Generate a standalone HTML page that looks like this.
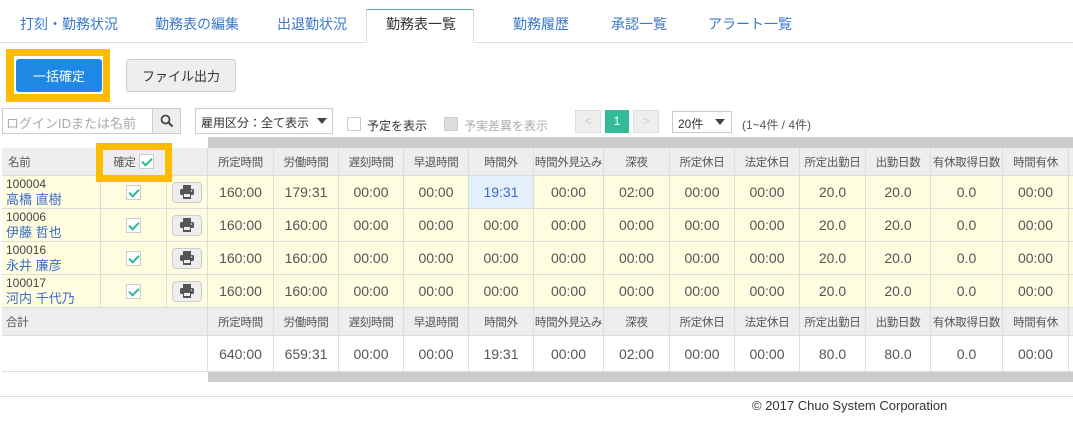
<!DOCTYPE html>
<html><head><meta charset="utf-8"><style>
*{box-sizing:border-box;margin:0;padding:0}
body{width:1073px;height:421px;background:#fff;font-family:"Liberation Sans","Noto Sans CJK JP",sans-serif;color:#333;position:relative;overflow:hidden;font-size:12px}
.a{position:absolute}
.tab{position:absolute;top:14px;font-size:14px;color:#3a78c8;white-space:nowrap}
.cell{position:absolute;border-right:1px solid #ddd;border-bottom:1px solid #ddd;display:flex;align-items:center;justify-content:center;white-space:nowrap;overflow:hidden}
.h{background:#eee;font-size:11.5px;color:#555;letter-spacing:-0.3px}
.d{background:#fffde0;font-size:14px;color:#555}
.t{background:#fff;font-size:14px;color:#555}
.cb{width:15px;height:15px;border:1px solid #ccc;background:#fff;position:relative;display:inline-block}
.cb:after{content:"";position:absolute;left:4px;top:1px;width:4px;height:8px;border:solid #2fb896;border-width:0 2px 2px 0;transform:rotate(45deg)}
.pr{width:30px;height:21px;border:1px solid #ccc;border-radius:4px;background:#eee;display:flex;align-items:center;justify-content:center}
</style></head><body>
<div class="a" style="left:0;top:42px;width:1073px;height:1px;background:#ddd"></div>
<div class="a" style="left:366px;top:9px;width:108px;height:34px;border:1px solid #ddd;border-top:1px solid #5aa;border-bottom:none;background:#fff"></div>
<div class="tab" style="left:20px">打刻・勤務状況</div>
<div class="tab" style="left:155px">勤務表の編集</div>
<div class="tab" style="left:277px">出退勤状況</div>
<div class="tab" style="left:386px;color:#333">勤務表一覧</div>
<div class="tab" style="left:513px">勤務履歴</div>
<div class="tab" style="left:611px">承認一覧</div>
<div class="tab" style="left:708px">アラート一覧</div>

<div class="a" style="left:6px;top:49px;width:104px;height:53px;background:#fcbd00"></div>
<div class="a" style="left:14px;top:56px;width:89px;height:38px;background:#fff"></div>
<div class="a" style="left:16px;top:59px;width:86px;height:33px;background:#1e88e5;border-radius:3px;color:#fff;font-size:13px;display:flex;align-items:center;justify-content:center">一括確定</div>
<div class="a" style="left:126px;top:59px;width:110px;height:33px;background:#eee;border:1px solid #ccc;border-radius:3px;font-size:13px;display:flex;align-items:center;justify-content:center">ファイル出力</div>

<div class="a" style="left:2px;top:108px;width:151px;height:26px;border:1px solid #ccc;color:#aaa;font-size:13px;padding:4px 3px;white-space:nowrap">ログインIDまたは名前</div>
<div class="a" style="left:152px;top:108px;width:29px;height:26px;border:1px solid #ccc;background:#eee;display:flex;align-items:center;justify-content:center"><svg width="14" height="14" viewBox="0 0 14 14"><circle cx="5.5" cy="5.5" r="4" fill="none" stroke="#444" stroke-width="1.8"/><path d="M8.5 8.5L12.5 12.5" stroke="#444" stroke-width="2"/></svg></div>
<div class="a" style="left:195px;top:108px;width:138px;height:26px;border:1px solid #ccc;font-size:12px;padding:5px 5px;color:#333;white-space:nowrap">雇用区分：全て表示</div>
<div class="a" style="left:317px;top:118px;border-left:5px solid transparent;border-right:5px solid transparent;border-top:6px solid #444"></div>
<div class="a" style="left:347px;top:117px;width:14px;height:14px;border:1px solid #ccc"></div>
<div class="a" style="left:367px;top:117px;font-size:12px">予定を表示</div>
<div class="a" style="left:444px;top:117px;width:14px;height:14px;border:1px solid #ccc;background:#ddd"></div>
<div class="a" style="left:464px;top:117px;font-size:12px;color:#aaa">予実差異を表示</div>
<div class="a" style="left:575px;top:110px;width:26px;height:23px;background:#eee;border:1px solid #ddd;color:#ccc;text-align:center;line-height:21px">&lt;</div>
<div class="a" style="left:605px;top:110px;width:24px;height:23px;background:#33bb99;color:#fff;text-align:center;line-height:23px">1</div>
<div class="a" style="left:633px;top:110px;width:26px;height:23px;background:#eee;border:1px solid #ddd;color:#ccc;text-align:center;line-height:21px">&gt;</div>
<div class="a" style="left:672px;top:111px;width:60px;height:22px;border:1px solid #ccc;padding:3px 5px">20件</div>
<div class="a" style="left:715px;top:119px;border-left:5px solid transparent;border-right:5px solid transparent;border-top:6px solid #444"></div>
<div class="a" style="left:742px;top:116px;color:#555;font-size:12px">(1~4件 / 4件)</div>

<div class="a" style="left:208px;top:137px;width:865px;height:11px;background:#ccc"></div>
<div class="a" style="left:208px;top:372px;width:865px;height:10px;background:#ccc"></div>
<div class="a" style="left:2px;top:148px;width:1071px;height:224px;border-left:1px solid #ddd;border-top:1px solid #ddd"></div>
<div id="tb"></div>
<div class="a" style="left:96px;top:143px;width:76px;height:39px;border:7px solid #fcbd00"></div>
<div class="a" style="left:0;top:396px;width:1073px;height:1px;background:#ddd"></div>
<div class="a" style="left:752px;top:398px;font-size:13px;color:#333">© 2017 Chuo System Corporation</div>
<script>
var xs=[2,101,167,208,274,339,404,469,534,604,670,735,800,866,931,1003,1069,1100];
var hd=["所定時間","労働時間","遅刻時間","早退時間","時間外","時間外見込み","深夜","所定休日","法定休日","所定出勤日","出勤日数","有休取得日数","時間有休",""];
var ys=[148,176,209,242,275,308,336,372];
var rows=[["100004","高橋 直樹",["160:00","179:31","00:00","00:00","19:31","00:00","02:00","00:00","00:00","20.0","20.0","0.0","00:00",""]],
["100006","伊藤 哲也",["160:00","160:00","00:00","00:00","00:00","00:00","00:00","00:00","00:00","20.0","20.0","0.0","00:00",""]],
["100016","永井 廉彦",["160:00","160:00","00:00","00:00","00:00","00:00","00:00","00:00","00:00","20.0","20.0","0.0","00:00",""]],
["100017","河内 千代乃",["160:00","160:00","00:00","00:00","00:00","00:00","00:00","00:00","00:00","20.0","20.0","0.0","00:00",""]]];
var tot=["640:00","659:31","00:00","00:00","19:31","00:00","02:00","00:00","00:00","80.0","80.0","0.0","00:00",""];
var h="";
function c(x1,x2,y1,y2,cls,txt,st){h+='<div class="cell '+cls+'" style="left:'+x1+'px;top:'+y1+'px;width:'+(x2-x1)+'px;height:'+(y2-y1)+'px;'+(st||'')+'">'+txt+'</div>';}
c(2,101,148,176,"h","名前","justify-content:flex-start;padding-left:6px");
c(101,167,148,176,"h",'確定&nbsp;<span class="cb"></span>');
c(167,208,148,176,"h","");
for(var i=0;i<14;i++)c(xs[i+3],xs[i+4],148,176,"h",hd[i]);
var pr='<span class="pr"><svg width="16" height="14" viewBox="0 0 16 14"><rect x="4" y="0" width="8" height="4" fill="#555"/><rect x="1" y="4" width="14" height="6" rx="1.5" fill="#555"/><rect x="4" y="8" width="8" height="6" fill="#555"/><rect x="5" y="9" width="6" height="3" fill="#eee"/><circle cx="12.5" cy="6" r="0.8" fill="#eee"/></svg></span>';
for(var r=0;r<4;r++){var y1=ys[r+1],y2=ys[r+2];
c(2,101,y1,y2,"d",'<div style="font-size:12px;line-height:15px;padding-left:4px;width:100%;color:#444">'+rows[r][0]+'<br><span style="color:#3a6cc8;font-size:13px">'+rows[r][1]+'</span></div>',"justify-content:flex-start");
c(101,167,y1,y2,"d",'<span class="cb"></span>');
c(167,208,y1,y2,"d",pr);
for(var i=0;i<14;i++)c(xs[i+3],xs[i+4],y1,y2,"d",rows[r][2][i],(r==0&&i==4)?"background:#e3effa;color:#3a6cc8":"");}
c(2,208,308,336,"h","合計","justify-content:flex-start;padding-left:4px");
for(var i=0;i<14;i++)c(xs[i+3],xs[i+4],308,336,"h",hd[i]);
c(2,208,336,372,"t","");
for(var i=0;i<14;i++)c(xs[i+3],xs[i+4],336,372,"t",tot[i]);
document.getElementById("tb").innerHTML=h;
</script>
</body></html>
